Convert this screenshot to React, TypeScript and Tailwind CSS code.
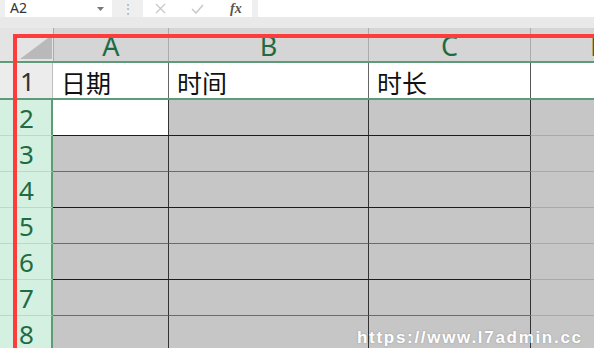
import React from "react";

const COLS = [
  { key: "A", w: "w-[115px]" },
  { key: "B", w: "w-[200px]" },
  { key: "C", w: "w-[162px]" },
];

const ROWS = [2, 3, 4, 5, 6, 7, 8];

const cjk = { fontFamily: '"Noto Sans CJK SC", "Noto Sans", sans-serif' };
const ui = { fontFamily: '"Noto Sans", "Open Sans", sans-serif' };

function Toolbar() {
  return (
    <div className="flex h-[17px] items-stretch bg-[#efefef]" style={ui}>
      <div className="ml-[5px] flex w-[107px] items-center justify-between bg-white pl-[5px] pr-[8px] text-[14px] text-[#333]">
        <span className="-mt-[2px]">A2</span>
        <svg width="7" height="4" viewBox="0 0 7 4">
          <path d="M0 0h7L3.5 4z" fill="#777" />
        </svg>
      </div>
      <div className="flex w-[31px] items-center justify-center text-[12px] leading-none text-[#aaa]">⋮</div>
      <div className="flex w-[109px] items-center bg-white text-[#c4c4c4]">
        <svg className="ml-[12px]" width="11" height="11" viewBox="0 0 11 11">
          <path d="M1 1l9 9M10 1l-9 9" stroke="#c8c8c8" strokeWidth="1.3" fill="none" />
        </svg>
        <svg className="ml-[25px]" width="13" height="10" viewBox="0 0 13 10">
          <path d="M1 5l4 4 7-8" stroke="#c8c8c8" strokeWidth="1.5" fill="none" />
        </svg>
        <span
          className="ml-[26px] text-[14px] font-bold italic text-[#555]"
          style={{ fontFamily: '"Liberation Serif", serif' }}
        >
          fx
        </span>
      </div>
      <div className="ml-[6px] flex-1 bg-white" />
    </div>
  );
}

function HeaderRow() {
  return (
    <div className="flex h-[35px] border-b-2 border-[#5d9b79] bg-[#d5d5d5]" style={ui}>
      <div className="relative w-[53px] shrink-0 bg-[#e4e4e4]">
        <svg className="absolute bottom-[2px] right-[1px]" width="32" height="24" viewBox="0 0 32 24">
          <path d="M32 0V24H0z" fill="#b9b9b9" />
        </svg>
      </div>
      {COLS.map((c) => (
        <div
          key={c.key}
          className={`${c.w} shrink-0 border-l border-[#ababab] pt-[3px] text-center text-[27px] leading-[30px] text-[#1f6b44]`}
        >
          {c.key}
        </div>
      ))}
      <div className="flex-1 overflow-hidden border-l border-[#ababab] pl-[59px] pt-[3px] text-[27px] leading-[30px] text-[#1f6b44]">
        D
      </div>
    </div>
  );
}

function TitleRow() {
  const labels = ["日期", "时间", "时长"];
  return (
    <div className="flex h-[37px] border-b-2 border-[#5d9b79]">
      <div
        className="w-[53px] shrink-0 border-r border-[#bdbdbd] bg-[#ececec] pl-[20px] text-[26px] leading-[36px] text-[#333]"
        style={ui}
      >
        1
      </div>
      {COLS.map((c, i) => (
        <div
          key={c.key}
          className={`${c.w} shrink-0 bg-white pl-[8px] text-[25px] leading-[38px] text-[#111] ${i > 0 ? "border-l border-[#666]" : ""}`}
          style={cjk}
        >
          {labels[i]}
        </div>
      ))}
      <div className="flex-1 border-l border-[#555] bg-white" />
    </div>
  );
}

function DataRow({ n }: { n: number }) {
  const dark = n % 2 === 0;
  const line = dark ? "border-[#1c1c1c]" : "border-[#6a6a6a]";
  return (
    <div className="flex h-[36px]">
      <div
        className="w-[53px] shrink-0 border-b border-r-2 border-b-[#bcd8c8] border-r-[#5d9b79] bg-[#d3f0e0] pl-[19px] text-[26px] leading-[36px] text-[#1f6b44]"
        style={ui}
      >
        {n}
      </div>
      {COLS.map((c, i) => (
        <div
          key={c.key}
          className={`${c.w} shrink-0 border-b ${line} ${i > 0 ? "border-l border-l-[#333]" : ""} ${
            n === 2 && i === 0 ? "bg-white" : "bg-[#c6c6c6]"
          }`}
        />
      ))}
      <div className="flex-1 border-b border-l border-b-[#a9a9a9] border-l-[#333] bg-[#c6c6c6]" />
    </div>
  );
}

export default function App() {
  return (
    <div className="relative h-[348px] w-[594px] overflow-hidden bg-[#e9e9e9]">
      <Toolbar />
      <div className="h-[11px] bg-[#e9e9e9]" />
      <HeaderRow />
      <TitleRow />
      {ROWS.map((n) => (
        <DataRow key={n} n={n} />
      ))}
      {/* red annotation frame */}
      <div className="pointer-events-none absolute left-[13px] top-[34px] h-[400px] w-[700px] border-[4px] border-[#ff3c3c]" />
      <div
        className="pointer-events-none absolute left-[357px] top-[325px] text-[17px] font-bold tracking-[1.7px] text-white"
        style={{ fontFamily: '"Liberation Sans", Arial, sans-serif', textShadow: "0 0 2px rgba(0,0,0,0.25)" }}
      >
        https://www.l7admin.cc
      </div>
    </div>
  );
}
